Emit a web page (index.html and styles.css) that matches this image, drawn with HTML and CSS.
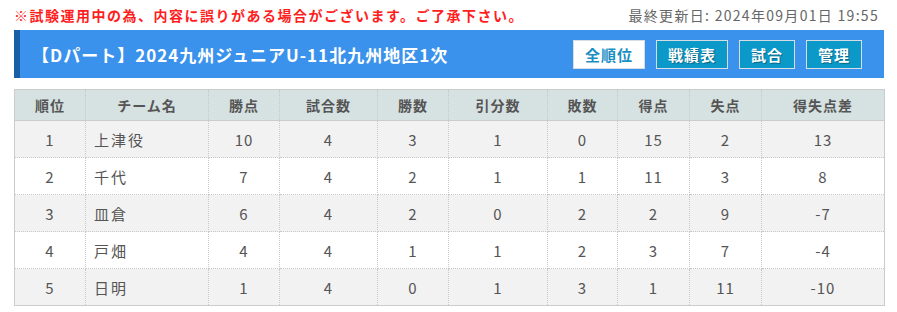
FILE: index.html
```html
<!DOCTYPE html>
<html lang="ja">
<head>
<meta charset="utf-8">
<link rel="stylesheet" href="styles.css">
</head>
<body>
<div class="page">
  <div class="topline">
    <span class="notice">※試験運用中の為、内容に誤りがある場合がございます。ご了承下さい。</span>
    <span class="updated">最終更新日: 2024年09月01日 19:55</span>
  </div>
  <div class="titlebar">
    <h1 class="title">【Dパート】2024九州ジュニアU-11北九州地区1次</h1>
    <nav class="btns">
      <a class="btn btn-wide btn-active">全順位</a>
      <a class="btn btn-wide">戦績表</a>
      <a class="btn">試合</a>
      <a class="btn">管理</a>
    </nav>
  </div>
  <table class="standings">
    <colgroup>
      <col class="c71"><col class="c123"><col class="c71"><col class="c98"><col class="c71"><col class="c99"><col class="c70"><col class="c72"><col class="c72"><col class="c123">
    </colgroup>
    <thead>
      <tr><th>順位</th><th>チーム名</th><th>勝点</th><th>試合数</th><th>勝数</th><th>引分数</th><th>敗数</th><th>得点</th><th>失点</th><th>得失点差</th></tr>
    </thead>
    <tbody>
      <tr class="odd"><td>1</td><td class="name">上津役</td><td>10</td><td>4</td><td>3</td><td>1</td><td>0</td><td>15</td><td>2</td><td>13</td></tr>
      <tr><td>2</td><td class="name">千代</td><td>7</td><td>4</td><td>2</td><td>1</td><td>1</td><td>11</td><td>3</td><td>8</td></tr>
      <tr class="odd"><td>3</td><td class="name">皿倉</td><td>6</td><td>4</td><td>2</td><td>0</td><td>2</td><td>2</td><td>9</td><td>-7</td></tr>
      <tr><td>4</td><td class="name">戸畑</td><td>4</td><td>4</td><td>1</td><td>1</td><td>2</td><td>3</td><td>7</td><td>-4</td></tr>
      <tr class="odd"><td>5</td><td class="name">日明</td><td>1</td><td>4</td><td>0</td><td>1</td><td>3</td><td>1</td><td>11</td><td>-10</td></tr>
    </tbody>
  </table>
</div>
</body>
</html>
```
FILE: styles.css
```css
html, body {
  margin: 0;
  padding: 0;
  background: #fff;
}
body {
  font-family: "Noto Sans CJK JP", "Noto Sans", sans-serif;
  color: #555;
}
.page {
  padding: 0 13px 0 14px;
}
.topline {
  height: 30px;
  display: flex;
  justify-content: space-between;
  align-items: center;
}
.notice {
  color: #ff1e1e;
  font-weight: bold;
  font-size: 14px;
  letter-spacing: 1.5px;
}
.updated {
  color: #666;
  font-size: 14px;
  letter-spacing: 1.3px;
  margin-right: 5px;
}
.titlebar {
  height: 48px;
  background: #3a92ec;
  border-left: 6px solid #1a5ea6;
  display: flex;
  align-items: center;
  justify-content: space-between;
  padding-left: 12px;
  padding-right: 22px;
}
.title {
  margin: 0;
  color: #fff;
  font-size: 17px;
  font-weight: bold;
  letter-spacing: 1px;
}
.btns {
  display: flex;
  gap: 11px;
}
.btn {
  box-sizing: border-box;
  width: 56px;
  height: 29px;
  display: flex;
  align-items: center;
  justify-content: center;
  background: #0b99c9;
  border: 1px solid #d7dde2;
  color: #fff;
  font-size: 15px;
  font-weight: bold;
  letter-spacing: 1px;
  text-shadow: 1px 1px 1px rgba(0,0,0,0.35);
}
.btn-wide {
  width: 72px;
}
.btn-active {
  background: #fff;
  color: #1a8fc4;
  text-shadow: none;
}
.standings {
  margin-top: 11px;
  width: 870px;
  table-layout: fixed;
  border-collapse: collapse;
  border: 1px solid #ccc;
  font-size: 14px;
  letter-spacing: 1px;
}
.c70 { width: 70px; }
.c71 { width: 71px; }
.c72 { width: 72px; }
.c98 { width: 98px; }
.c99 { width: 99px; }
.c123 { width: 123px; }
.standings th {
  height: 30px;
  background: #d6e1e1;
  color: #555;
  font-weight: bold;
  border: 1px dotted #c8c8c8;
  border-bottom: 1px solid #ccc;
  padding: 0;
}
.standings td {
  height: 36px;
  text-align: center;
  border: 1px dotted #c8c8c8;
  padding: 0;
  color: #555;
  font-size: 15px;
}
.standings td.name {
  text-align: left;
  padding-left: 8px;
  letter-spacing: 2px;
}
.standings tr.odd td {
  background: #f2f2f2;
}
```
